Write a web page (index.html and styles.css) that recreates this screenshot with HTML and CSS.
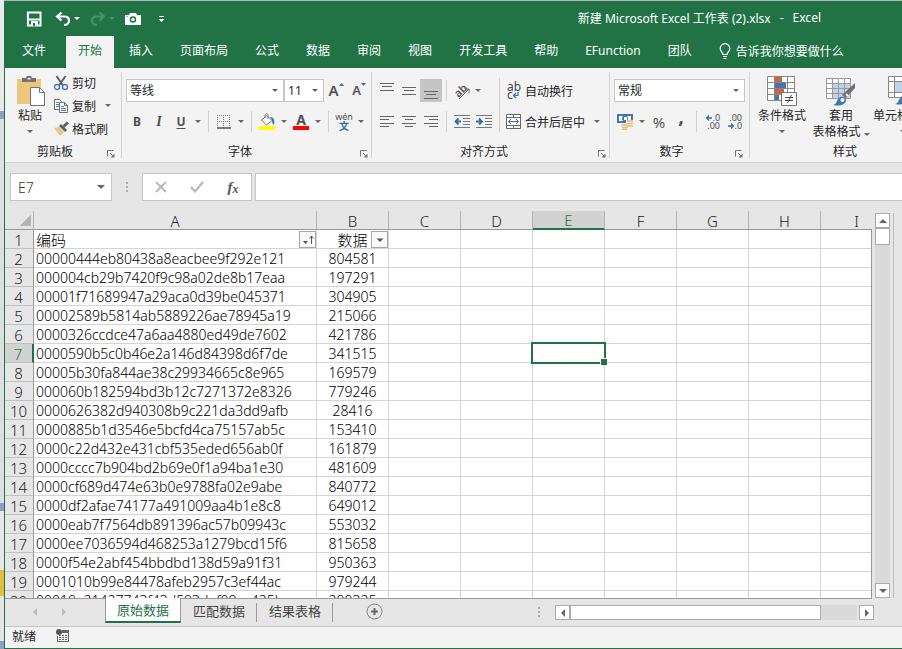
FILE: index.html
```html
<!DOCTYPE html>
<html lang="zh-CN">
<head>
  <meta charset="UTF-8">
  <meta name="viewport" content="width=device-width, initial-scale=1.0">
  <title>新建 Microsoft Excel 工作表 (2).xlsx - Excel</title>
  <link rel="stylesheet" href="styles.css">
</head>
<body>
  <div class="desktop"></div>
  <div class="window">

    <!-- Title bar -->
    <header class="titlebar">
      <div class="quick">
        <button class="q-save" aria-label="保存">
          <svg width="16" height="16" viewBox="0 0 16 16"><path d="M1.900 1.500h12.600v13h-12.600z" fill="none" stroke="#fff" stroke-width="2"/><path d="M2 8.500h12" stroke="#fff" stroke-width="2"/><path d="M5 10h7v5H5z" fill="#fff"/><path d="M7 12h2v3H7z" fill="#217346"/></svg>
        </button>
        <button class="q-undo" aria-label="撤消">
          <svg width="16" height="16" viewBox="0 0 16 16"><path d="M6.500 1.500L2 5.500l4.500 4M2.500 5.500H9c3 0 5 1.500 5 4s-2 4.500-5 4.500" fill="none" stroke="#fff" stroke-width="2.200"/></svg>
        </button>
        <button class="drop light" aria-label="撤消列表"></button>
        <button class="q-redo" aria-label="恢复" disabled>
          <svg width="16" height="16" viewBox="0 0 16 16"><path d="M9.500 1.500L14 5.500l-4.500 4M13.500 5.500H7c-3 0-5 1.500-5 4s2 4.500 5 4.500" fill="none" stroke="#4d8f6b" stroke-width="2.200"/></svg>
        </button>
        <button class="drop faded" aria-label="恢复列表" disabled></button>
        <button class="q-camera" aria-label="照相机">
          <svg width="16" height="14" viewBox="0 0 16 14"><path d="M0 3h4l1-2h6l1 2h4v10H0z" fill="#fff"/><circle cx="8" cy="7.500" r="2.500" fill="#fff" stroke="#217346" stroke-width="1.500"/><path d="M1.500 4.500h1" stroke="#217346"/></svg>
        </button>
        <button class="q-more" aria-label="自定义快速访问工具栏">
          <svg width="7" height="8" viewBox="0 0 7 8"><path d="M1 1.500h5" stroke="#fff"/><path d="M0.500 4h6l-3 3z" fill="#fff"/></svg>
        </button>
      </div>
      <h1 class="doc-title"><span>新建 Microsoft Excel 工作表 (2).xlsx</span><span>-</span><span>Excel</span></h1>
    </header>

    <!-- Ribbon tabs -->
    <nav class="tabs">
      <button class="tab file">文件</button>
      <button class="tab active">开始</button>
      <button class="tab">插入</button>
      <button class="tab">页面布局</button>
      <button class="tab">公式</button>
      <button class="tab">数据</button>
      <button class="tab">审阅</button>
      <button class="tab">视图</button>
      <button class="tab">开发工具</button>
      <button class="tab">帮助</button>
      <button class="tab">EFunction</button>
      <button class="tab">团队</button>
      <button class="tab tell">
        <svg width="12" height="17" viewBox="0 0 12 17"><path d="M4 11.500c0-2-2.800-3-2.800-6a4.800 4.800 0 0 1 9.600 0c0 3-2.800 4-2.800 6zM4 13.500h4M4.500 15.500h3" fill="none" stroke="#fff" stroke-width="1.200"/></svg>
        告诉我你想要做什么
      </button>
    </nav>

    <!-- Ribbon -->
    <div class="ribbon">
      <section class="group">
        <div class="group-body">
          <button class="big paste">
            <svg width="30" height="32" viewBox="0 0 30 32"><path d="M0 4h24v25H0z" fill="#eec77f"/><path d="M5 7V3h4c0-3 6-3 6 0h4v4z" fill="#737373"/><path d="M10.500 3h3v1.500h-3z" fill="#f3f3f3"/><path d="M13.500 12.500h9l5 5v13h-14z" fill="#fff" stroke="#737373"/><path d="M22.500 12.500v5h5" fill="none" stroke="#737373"/></svg>
            <span>粘贴</span>
            <i class="caret"></i>
          </button>
          <div class="clip-list">
            <button class="item">
              <svg width="16" height="16" viewBox="0 0 16 16"><path d="M3.500 1L10 10.500M12.500 1L6 10.500" stroke="#606060" stroke-width="2"/><circle cx="4" cy="12" r="2.500" fill="none" stroke="#4a7ebb" stroke-width="1.400"/><circle cx="12" cy="12" r="2.500" fill="none" stroke="#4a7ebb" stroke-width="1.400"/></svg>
              剪切
            </button>
            <div class="split">
              <button class="item">
                <svg width="16" height="16" viewBox="0 0 16 16"><path d="M1.500 1.500h5l2 2v8h-7z" fill="#fff" stroke="#6d6d6d"/><path d="M3 4.500h3M3 6.500h3M3 8.500h3" stroke="#4a7ebb"/><path d="M6.500 4.500h5l3 3v7h-8z" fill="#fff" stroke="#6d6d6d"/><path d="M11.500 4.500v3h3" fill="none" stroke="#6d6d6d"/><path d="M8 8.500h3M8 10.500h5M8 12.500h5" stroke="#4a7ebb"/></svg>
                复制
              </button>
              <button class="drop" aria-label="复制选项"></button>
            </div>
            <button class="item">
              <svg width="16" height="16" viewBox="0 0 16 16"><path d="M1 7l5-1 5 5-4 4z" fill="#eec08a"/><path d="M6 5l2-2 6 6-2 2z" fill="#606060"/><path d="M10.500 5.500L15 1.500" stroke="#606060" stroke-width="3"/></svg>
              格式刷
            </button>
          </div>
        </div>
        <footer class="group-foot"><span>剪贴板</span><button class="launch" aria-label="剪贴板设置"><svg width="8" height="8" viewBox="0 0 8 8"><path d="M.500 6.500v-6h6M3 3l3 3" fill="none" stroke="#777"/><path d="M7.500 3.500v4h-4z" fill="#777"/></svg></button></footer>
      </section>

      <section class="group font">
        <div class="group-body rows">
          <div class="line">
            <select class="combo font-name" aria-label="字体"><option>等线</option></select>
            <select class="combo font-size" aria-label="字号"><option>11</option></select>
            <button class="tool grow" aria-label="增大字号"><span class="letter">A</span><svg width="5" height="3" viewBox="0 0 5 3"><path d="M0 3L2.500 0 5 3z" fill="#2e75b6"/></svg></button>
            <button class="tool grow small" aria-label="减小字号"><span class="letter">A</span><svg width="5" height="3" viewBox="0 0 5 3"><path d="M0 0h5L2.500 3z" fill="#2e75b6"/></svg></button>
          </div>
          <div class="line">
            <button class="tool bold">B</button>
            <button class="tool italic">I</button>
            <button class="tool under">U</button>
            <button class="drop" aria-label="下划线选项"></button>
            <span class="sep"></span>
            <button class="tool" aria-label="边框"><svg width="14" height="14" viewBox="0 0 14 14"><path d="M0 .500h14M0 6.500h14M.500 0v13M6.500 0v13M12.500 0v13" stroke="#777" stroke-dasharray="1 1"/><path d="M0 13h14" stroke="#555" stroke-width="1.500"/></svg></button>
            <button class="drop" aria-label="边框选项"></button>
            <span class="sep"></span>
            <button class="tool" aria-label="填充颜色"><svg width="16" height="17" viewBox="0 0 16 17"><path d="M2.500 7L8 2.500l5 5-5.500 4.500z" fill="#fff" stroke="#777"/><path d="M6 5V2.500C6 0 9 0 9 2.500V6" fill="none" stroke="#777"/><path d="M11 4c4 0 5 3 4 8-2-1-2-4-2-5z" fill="#3c78b4"/><path d="M0 13h16v4H0z" fill="#ff0"/></svg></button>
            <button class="drop" aria-label="填充颜色选项"></button>
            <button class="tool font-color" aria-label="字体颜色"><span>A</span></button>
            <button class="drop" aria-label="字体颜色选项"></button>
            <span class="sep"></span>
            <button class="tool phonetic" aria-label="拼音指南"><span>wén</span><b>文</b></button>
            <button class="drop" aria-label="拼音选项"></button>
          </div>
        </div>
        <footer class="group-foot"><span>字体</span><button class="launch" aria-label="字体设置"><svg width="8" height="8" viewBox="0 0 8 8"><path d="M.500 6.500v-6h6M3 3l3 3" fill="none" stroke="#777"/><path d="M7.500 3.500v4h-4z" fill="#777"/></svg></button></footer>
      </section>

      <section class="group align">
        <div class="group-body">
          <div class="rows align-tools">
            <div class="line">
              <button class="tool" aria-label="顶端对齐"><svg width="14" height="16" viewBox="0 0 14 16"><path d="M0 .500h14M2 3.500h10M0 7.500h14" stroke="#666"/></svg></button>
              <button class="tool" aria-label="垂直居中"><svg width="14" height="16" viewBox="0 0 14 16"><path d="M0 4.500h14M2 7.500h10M0 11.500h14" stroke="#666"/></svg></button>
              <button class="tool pressed" aria-label="底端对齐"><svg width="14" height="16" viewBox="0 0 14 16"><path d="M0 8.500h14M2 11.500h10M0 15.500h14" stroke="#666"/></svg></button>
              <span class="sep"></span>
              <button class="tool rotate" aria-label="方向"><svg width="18" height="18" viewBox="0 0 18 18"><text x="1" y="13" transform="rotate(-45 7 9)">ab</text><path d="M6 17L16 7M11.500 7H16v4.500" fill="none" stroke="#666"/></svg></button>
              <button class="drop tight" aria-label="方向选项"></button>
            </div>
            <div class="line">
              <button class="tool" aria-label="左对齐"><svg width="14" height="12" viewBox="0 0 14 12"><path d="M0 .500h14M0 3.500h9M0 7.500h14M0 10.500h9" stroke="#666"/></svg></button>
              <button class="tool" aria-label="居中"><svg width="14" height="12" viewBox="0 0 14 12"><path d="M0 .500h14M3 3.500h8M0 7.500h14M3 10.500h8" stroke="#666"/></svg></button>
              <button class="tool" aria-label="右对齐"><svg width="14" height="12" viewBox="0 0 14 12"><path d="M0 .500h14M5 3.500h9M0 7.500h14M5 10.500h9" stroke="#666"/></svg></button>
              <span class="sep"></span>
              <button class="tool" aria-label="减少缩进量"><svg width="16" height="14" viewBox="0 0 16 14"><path d="M0 .500h16M9 3.500h7M9 6.500h7M9 9.500h7M0 12.500h16" stroke="#777"/><path d="M7 6.500H2M4.500 3.500l-3 3 3 3" fill="none" stroke="#2e6eb0" stroke-width="1.800"/></svg></button>
              <button class="tool" aria-label="增加缩进量"><svg width="16" height="14" viewBox="0 0 16 14"><path d="M0 .500h16M9 3.500h7M9 6.500h7M9 9.500h7M0 12.500h16" stroke="#777"/><path d="M0 6.500h5M3 3.500l3 3-3 3" fill="none" stroke="#2e6eb0" stroke-width="1.800"/></svg></button>
            </div>
          </div>
          <div class="rows wrap-tools">
            <div class="line">
              <button class="item"><svg class="abc" width="15" height="20" viewBox="0 0 15 20"><text x="1" y="10">ab</text><text x="1" y="18">c</text><path d="M12 11v3.500H8M10 12l-2.500 2.500L10 17" fill="none" stroke="#2e6eb0" stroke-width="1.200"/></svg>自动换行</button>
            </div>
            <div class="line">
              <button class="item"><svg width="15" height="16" viewBox="0 0 15 16"><path d="M.500 .500h14v14H.500zM.500 3.500h14M.500 11.500h14M7.500 .500v3M7.500 11.500v3" fill="#fff" stroke="#666"/><path d="M2.500 7.500h10M5 5L2.500 7.500 5 10M10 5l2.500 2.500L10 10" fill="none" stroke="#2e6eb0"/></svg>合并后居中</button>
              <button class="drop wide" aria-label="合并选项"></button>
            </div>
          </div>
        </div>
        <footer class="group-foot"><span>对齐方式</span><button class="launch" aria-label="对齐设置"><svg width="8" height="8" viewBox="0 0 8 8"><path d="M.500 6.500v-6h6M3 3l3 3" fill="none" stroke="#777"/><path d="M7.500 3.500v4h-4z" fill="#777"/></svg></button></footer>
      </section>

      <section class="group">
        <div class="group-body rows">
          <div class="line">
            <select class="combo number-format" aria-label="数字格式"><option>常规</option></select>
          </div>
          <div class="line">
            <button class="tool" aria-label="会计数字格式"><svg width="17" height="17" viewBox="0 0 17 17"><path d="M0 1h16v9H0z" fill="#3c78b4"/><path d="M2 3h12v5H2z" fill="#fff"/><circle cx="8" cy="5.500" r="3" fill="#3c78b4"/><path d="M7 4h3v3H7z" fill="#fff"/><path d="M9 7h7v8h-4v2H5v-6h4z" fill="#f3f3f3"/><path d="M10 8h6M10 10.500h6M10 13h6M4.500 12h6M5 14.500h6M5 16.500h5" stroke="#e8bb78" stroke-width="1.500"/></svg></button>
            <button class="drop" aria-label="货币选项"></button>
            <button class="tool percent">%</button>
            <button class="tool comma">,</button>
            <span class="sep"></span>
            <button class="tool decimal" aria-label="增加小数位数"><span><svg width="6" height="6" viewBox="0 0 6 6"><path d="M6 3H1M3 .500L.700 3 3 5.500" fill="none" stroke="#2e6eb0" stroke-width="1.300"/></svg>.0</span><span>.00</span></button>
            <button class="tool decimal" aria-label="减少小数位数"><span>.00</span><span><svg width="6" height="6" viewBox="0 0 6 6"><path d="M0 3h5M3 .500L5.300 3 3 5.500" fill="none" stroke="#2e6eb0" stroke-width="1.300"/></svg>.0</span></button>
          </div>
        </div>
        <footer class="group-foot"><span>数字</span><button class="launch" aria-label="数字设置"><svg width="8" height="8" viewBox="0 0 8 8"><path d="M.500 6.500v-6h6M3 3l3 3" fill="none" stroke="#777"/><path d="M7.500 3.500v4h-4z" fill="#777"/></svg></button></footer>
      </section>

      <section class="group styles">
        <div class="group-body">
          <button class="big">
            <svg width="30" height="32" viewBox="0 0 30 32"><path d="M.500 1.500h27v24H.500z" fill="#fff"/><path d="M8 2h6v5H8zM8 14h9v5H8z" fill="#d9603c"/><path d="M8 8h11v5H8zM8 20h4v5H8z" fill="#3c78b4"/><path d="M.500 1.500h27v24H.500zM.500 7.500h27M.500 13.500h27M.500 19.500h27M7.500 1.500v24M20.500 1.500v24M14.500 1.500v6" fill="none" stroke="#888"/><path d="M14.500 17.500h15v13h-15z" fill="#fff" stroke="#777"/><path d="M18 22.500h8M18 25.500h8M24.500 20l-4 8" stroke="#444"/></svg>
            <span>条件格式</span>
            <i class="caret"></i>
          </button>
          <button class="big">
            <svg width="30" height="32" viewBox="0 0 30 32"><path d="M.500 3.500h24v20H.500z" fill="#fff"/><path d="M7 9h17v14H7z" fill="#c0d3ea"/><path d="M.500 3.500h24v20H.500zM.500 8.500h24M.500 13.500h24M.500 18.500h24M6.500 3.500v20M12.500 3.500v20M18.500 3.500v20" fill="none" stroke="#999"/><path d="M29 8v5l-9 10-4-3z" fill="#707070"/><path d="M20 19l2 2" stroke="#fff" stroke-width="2"/><path d="M7 30c4-1 3-4 6-7 3-3 8 0 7 3-2 5-8 5-13 4z" fill="#3c78b4"/><circle cx="16.500" cy="25" r="2" fill="#fff"/></svg>
            <span>套用</span>
            <span>表格格式 <i class="caret"></i></span>
          </button>
          <button class="big">
            <svg width="30" height="32" viewBox="0 0 30 32"><path d="M.500 1.500h27v21H.500z" fill="#fff"/><path d="M6 7h16v11H6z" fill="#c0d3ea"/><path d="M.500 1.500h27v21H.500zM.500 6.500h27M.500 17.500h27M6.500 1.500v21M21.500 1.500v21" fill="none" stroke="#888"/><path d="M7 29c4-1 3-4 6-7 3-3 8 0 7 3-2 5-8 5-13 4z" fill="#3c78b4"/></svg>
            <span>单元格样式</span>
            <i class="caret"></i>
          </button>
        </div>
        <footer class="group-foot"><span>样式</span></footer>
      </section>
    </div>

    <!-- Formula bar -->
    <div class="formula-bar">
      <div class="name-box">
        <input type="text" value="E7" aria-label="名称框">
        <button class="drop large" aria-label="名称列表"></button>
      </div>
      <span class="dots"></span>
      <div class="fx-box">
        <button aria-label="取消"><svg width="12" height="12" viewBox="0 0 12 12"><path d="M1 1l10 10M11 1L1 11" stroke="#b8b8b8" stroke-width="1.800"/></svg></button>
        <button aria-label="输入"><svg width="14" height="12" viewBox="0 0 14 12"><path d="M1 6l4 4.500L13 1" fill="none" stroke="#b8b8b8" stroke-width="2.200"/></svg></button>
        <button class="fx" aria-label="插入函数">f<small>x</small></button>
      </div>
      <input class="formula" type="text" aria-label="编辑栏">
    </div>

    <!-- Sheet -->
    <div class="sheet">
      <div class="grid">
        <table>
          <colgroup><col class="c-num"><col class="c-a"><col><col><col><col><col><col><col><col></colgroup>
          <thead>
            <tr><th class="corner"></th><th>A</th><th>B</th><th>C</th><th>D</th><th class="on">E</th><th>F</th><th>G</th><th>H</th><th>I</th></tr>
          </thead>
          <tbody>
            <tr class="head-row"><th>1</th><td>编码<button class="filter" aria-label="排序"><svg width="14" height="14" viewBox="0 0 14 14"><path d="M2 8h5L4.500 11zM10 3h1v8h-1z" fill="#555"/><path d="M8.500 5.500l2-2.500 2 2.500" fill="none" stroke="#555"/></svg></button></td><td>数据<button class="filter" aria-label="筛选"><svg width="14" height="14" viewBox="0 0 14 14"><path d="M3.500 5.500h7L7 9z" fill="#555"/></svg></button></td><td></td><td></td><td></td><td></td><td></td><td></td><td></td></tr>
            <tr><th>2</th><td>00000444eb80438a8eacbee9f292e121</td><td>804581</td><td></td><td></td><td></td><td></td><td></td><td></td><td></td></tr>
            <tr><th>3</th><td>000004cb29b7420f9c98a02de8b17eaa</td><td>197291</td><td></td><td></td><td></td><td></td><td></td><td></td><td></td></tr>
            <tr><th>4</th><td>00001f71689947a29aca0d39be045371</td><td>304905</td><td></td><td></td><td></td><td></td><td></td><td></td><td></td></tr>
            <tr><th>5</th><td>00002589b5814ab5889226ae78945a19</td><td>215066</td><td></td><td></td><td></td><td></td><td></td><td></td><td></td></tr>
            <tr><th>6</th><td>0000326ccdce47a6aa4880ed49de7602</td><td>421786</td><td></td><td></td><td></td><td></td><td></td><td></td><td></td></tr>
            <tr><th class="on">7</th><td>0000590b5c0b46e2a146d84398d6f7de</td><td>341515</td><td></td><td></td><td class="selected"></td><td></td><td></td><td></td><td></td></tr>
            <tr><th>8</th><td>00005b30fa844ae38c29934665c8e965</td><td>169579</td><td></td><td></td><td></td><td></td><td></td><td></td><td></td></tr>
            <tr><th>9</th><td>000060b182594bd3b12c7271372e8326</td><td>779246</td><td></td><td></td><td></td><td></td><td></td><td></td><td></td></tr>
            <tr><th>10</th><td>0000626382d940308b9c221da3dd9afb</td><td>28416</td><td></td><td></td><td></td><td></td><td></td><td></td><td></td></tr>
            <tr><th>11</th><td>0000885b1d3546e5bcfd4ca75157ab5c</td><td>153410</td><td></td><td></td><td></td><td></td><td></td><td></td><td></td></tr>
            <tr><th>12</th><td>0000c22d432e431cbf535eded656ab0f</td><td>161879</td><td></td><td></td><td></td><td></td><td></td><td></td><td></td></tr>
            <tr><th>13</th><td>0000cccc7b904bd2b69e0f1a94ba1e30</td><td>481609</td><td></td><td></td><td></td><td></td><td></td><td></td><td></td></tr>
            <tr><th>14</th><td>0000cf689d474e63b0e9788fa02e9abe</td><td>840772</td><td></td><td></td><td></td><td></td><td></td><td></td><td></td></tr>
            <tr><th>15</th><td>0000df2afae74177a491009aa4b1e8c8</td><td>649012</td><td></td><td></td><td></td><td></td><td></td><td></td><td></td></tr>
            <tr><th>16</th><td>0000eab7f7564db891396ac57b09943c</td><td>553032</td><td></td><td></td><td></td><td></td><td></td><td></td><td></td></tr>
            <tr><th>17</th><td>0000ee7036594d468253a1279bcd15f6</td><td>815658</td><td></td><td></td><td></td><td></td><td></td><td></td><td></td></tr>
            <tr><th>18</th><td>0000f54e2abf454bbdbd138d59a91f31</td><td>950363</td><td></td><td></td><td></td><td></td><td></td><td></td><td></td></tr>
            <tr><th>19</th><td>0001010b99e84478afeb2957c3ef44ac</td><td>979244</td><td></td><td></td><td></td><td></td><td></td><td></td><td></td></tr>
            <tr><th>20</th><td>00010a21427743f43d593def09ac425b</td><td>299325</td><td></td><td></td><td></td><td></td><td></td><td></td><td></td></tr>
          </tbody>
        </table>
      </div>
      <div class="vscroll">
        <button class="scroll-btn" aria-label="向上"><i class="tri up"></i></button>
        <div class="vthumb"></div>
        <div class="track"></div>
        <button class="scroll-btn" aria-label="向下"><i class="tri down"></i></button>
      </div>
    </div>

    <!-- Sheet tabs -->
    <div class="sheet-bar">
      <div class="sheet-nav">
        <button aria-label="上一个工作表"><i class="tri left pale"></i></button>
        <button aria-label="下一个工作表"><i class="tri right pale"></i></button>
      </div>
      <button class="sheet-tab active">原始数据</button>
      <button class="sheet-tab">匹配数据</button>
      <button class="sheet-tab">结果表格</button>
      <button class="add-sheet" aria-label="新工作表"><svg width="17" height="17" viewBox="0 0 17 17"><circle cx="8.500" cy="8.500" r="7.500" fill="none" stroke="#808080"/><path d="M8.500 5v7M5 8.500h7" stroke="#666" stroke-width="2"/></svg></button>
      <div class="hscroll">
        <span class="dots"></span>
        <button class="scroll-btn" aria-label="向左"><i class="tri left"></i></button>
        <div class="hthumb"></div>
        <div class="htrack"></div>
        <button class="scroll-btn" aria-label="向右"><i class="tri right"></i></button>
      </div>
    </div>

    <footer class="status">
      <span>就绪</span>
      <svg width="14" height="14" viewBox="0 0 14 14"><path d="M6 1h7v3H6z" fill="#666"/><path d="M1.500 7v5.500h11V3" fill="none" stroke="#666"/><circle cx="3" cy="3" r="3" fill="#555"/><path d="M3 6.500h8M3 8.500h8M3 10.500h8" stroke="#666" stroke-dasharray="2 1"/></svg>
    </footer>
  </div>
</body>
</html>
```
FILE: styles.css
```css
:root {
  --green: #217346;
  --ribbon: #f3f3f3;
  --panel: #e6e6e6;
  --line: #c6c6c6;
  --edge: #999;
  --cell-line: #d4d4d4;
}

* {
  box-sizing: border-box;
}

body {
  margin: 0;
  height: 100vh;
  display: flex;
  overflow: hidden;
  background: #b4b4b4;
  font-family: "Noto Sans", "Noto Sans CJK SC", sans-serif;
  font-size: 12px;
  color: #262626;
}

button, input, select {
  font: inherit;
  color: inherit;
  margin: 0;
  padding: 0;
  border: none;
  background: none;
}

button {
  display: flex;
  align-items: center;
  justify-content: center;
  white-space: nowrap;
}

svg {
  display: block;
  flex: none;
}

/* Strip of the desktop left of the window */
.desktop {
  flex: 0 0 4px;
  background: linear-gradient(#e8e8ea 0 111px, #8c9fc8 111px 119px, #dedfe3 119px 503px, #8c9fc8 503px 511px, #e6e6e8 511px 570px, #e3bd3f 570px 596px, #e4e4e6 596px 641px, #8c9fc8 641px);
}

.window {
  flex: 1;
  min-width: 0;
  margin-top: 1px;
  display: flex;
  flex-direction: column;
  border-left: 1px solid var(--green);
  border-bottom: 1px solid var(--green);
  background: var(--panel);
}

/* Title bar */
.titlebar {
  flex: none;
  height: 35px;
  display: flex;
  align-items: center;
  justify-content: space-between;
  padding: 0 81px 0 21px;
  background: var(--green);
  color: #fff;
}

.quick {
  display: flex;
  align-items: center;
}

.q-undo {
  margin-left: 13px;
}

.q-redo {
  margin-left: 7px;
}

.q-camera {
  margin-left: 7px;
}

.q-more {
  margin-left: 17px;
}

.doc-title {
  display: flex;
  gap: 9px;
  margin: 0;
  padding-bottom: 2px;
  font-size: 12px;
  font-weight: 400;
  white-space: nowrap;
}

/* Ribbon tabs */
.tabs {
  flex: none;
  height: 32px;
  display: flex;
  gap: 3px;
  padding-left: 5px;
  background: var(--green);
}

.tab {
  padding: 0 12px 4px;
  color: #fff;
}

.tab.file {
  margin-right: 5px;
}

.tab.active {
  background: var(--ribbon);
  color: var(--green);
}

.tab.tell {
  gap: 5px;
  padding-bottom: 2px;
}

/* Ribbon */
.ribbon {
  flex: none;
  height: 95px;
  display: flex;
  overflow: hidden;
  background: var(--ribbon);
  border-bottom: 1px solid #d0d0d0;
}

.group {
  flex: none;
  display: flex;
  flex-direction: column;
  margin: 4px 0;
  padding: 0 4px;
  border-right: 1px solid #d2d2d2;
}

.group.font, .group.align {
  padding-right: 1px;
}

.group-body {
  flex: 1;
  display: flex;
}

.rows {
  display: flex;
  flex-direction: column;
  gap: 8px;
  padding-top: 7px;
}

.line {
  display: flex;
  align-items: center;
  height: 23px;
}

.group-foot {
  display: flex;
  align-items: center;
  height: 16px;
}

.group-foot span {
  flex: 1;
  padding-top: 2px;
  text-align: center;
}

.launch {
  width: 16px;
  height: 16px;
  padding: 8px 0 0 4px;
}

.tool {
  width: 22px;
  height: 23px;
  color: #505050;
}

.pressed {
  background: #c5c5c5;
}

.drop {
  width: 12px;
  height: 23px;
}

.drop::before, .caret {
  content: "";
  display: inline-block;
  border: 3px solid transparent;
  border-top-color: #666;
  border-bottom: none;
}

.drop.light::before {
  border-top-color: #fff;
}

.drop.faded::before {
  border-top-color: #4d8f6b;
}

.drop.tight {
  width: 9px;
}

.drop.wide {
  width: 23px;
}

.drop.large::before {
  border-width: 4px 4px 0;
}

.sep {
  width: 1px;
  height: 21px;
  margin: 0 4px;
  background: #d2d2d2;
}

.item {
  gap: 4px;
  height: 23px;
}

.big {
  flex-direction: column;
  justify-content: flex-start;
  min-width: 58px;
  padding-top: 3px;
  line-height: 16px;
}

.big svg {
  margin-bottom: 1px;
}

.big > .caret {
  margin-top: 6px;
}

.paste {
  min-width: 42px;
  padding-left: 4px;
}

.paste span, .paste .caret {
  margin-right: 4px;
}

.clip-list {
  display: flex;
  flex-direction: column;
  align-items: flex-start;
  margin-top: -1px;
  padding: 0 3px 0 2px;
}

.clip-list .item {
  gap: 3px;
}

.split {
  display: flex;
  gap: 6px;
}

.combo {
  height: 23px;
  padding: 0 3px;
  border: 1px solid var(--line);
  border-radius: 0;
  appearance: none;
  background: #fff url("data:image/svg+xml,%3Csvg xmlns='http://www.w3.org/2000/svg' width='6' height='3'%3E%3Cpath d='M0 0h6L3 3z' fill='%23666'/%3E%3C/svg%3E") no-repeat right 5px center;
}

.font-name {
  width: 158px;
}

.font-size {
  width: 40px;
}

.number-format {
  width: 131px;
}

.grow {
  align-items: flex-start;
  margin-left: 1px;
  font-size: 15px;
  font-weight: 600;
  line-height: 23px;
}

.grow svg {
  margin-top: 4px;
}

.grow.small {
  font-size: 13px;
}

.bold, .italic, .under {
  font-weight: 700;
}

.italic {
  font-style: italic;
  font-family: "Liberation Serif", serif;
  font-size: 14px;
}

.under {
  text-decoration: underline;
  text-underline-offset: 2px;
}

.font-color span {
  width: 16px;
  border-bottom: 4px solid #f00;
  font-size: 14px;
  font-weight: 700;
  line-height: 13px;
}

.phonetic {
  flex-direction: column;
  font-size: 9px;
  line-height: 8px;
}

.phonetic b {
  color: #2e6eb0;
  font-size: 10px;
  line-height: 10px;
}

.align-tools {
  padding-right: 4px;
}

.wrap-tools {
  padding-left: 7px;
  background: linear-gradient(#d2d2d2, #d2d2d2) no-repeat 0 6px / 1px 54px;
}

.rotate text {
  font-size: 11px;
  font-weight: 600;
  fill: #555;
}

.abc text {
  font-size: 12px;
  fill: #444;
}

.percent {
  font-size: 15px;
}

.comma {
  padding-bottom: 12px;
  font-size: 20px;
  font-weight: 700;
}

.decimal {
  flex-direction: column;
  align-items: flex-end;
  padding-right: 3px;
  font-size: 9px;
  line-height: 8px;
}

.decimal span {
  display: flex;
  align-items: center;
}

.styles {
  flex: 0 0 208px;
  padding-left: 3px;
}

.styles .big + .big {
  margin-left: 1px;
}

.styles .big:last-child {
  margin-left: 3px;
}

.styles .group-foot {
  padding-right: 16px;
}

/* Formula bar */
.formula-bar {
  flex: none;
  height: 48px;
  display: flex;
  align-items: flex-start;
  padding: 10px 0 0 5px;
}

.name-box, .fx-box, .formula {
  height: 28px;
  border: 1px solid var(--line);
  background: #fff;
}

.name-box {
  display: flex;
  align-items: center;
  width: 102px;
}

.name-box input {
  flex: 1;
  min-width: 0;
  padding-left: 7px;
  font-size: 14px;
  font-weight: 300;
  color: #333;
}

.name-box .drop {
  width: 20px;
}

.dots {
  width: 2px;
  height: 10px;
  background: repeating-linear-gradient(#aaa 0 2px, transparent 2px 4px);
}

.formula-bar .dots {
  margin: 9px 14px;
}

.fx-box {
  display: flex;
  width: 110px;
}

.fx-box button {
  flex: 1;
}

.fx {
  font: italic 700 15px "Liberation Serif", serif;
  color: #555;
}

.fx small {
  font-size: 12px;
  padding-top: 4px;
}

.formula {
  flex: 1;
  min-width: 0;
  margin-left: 3px;
  border-right: none;
}

/* Sheet */
.sheet {
  flex: 1;
  min-height: 0;
  display: flex;
}

.grid {
  flex: 1;
  min-width: 0;
  overflow: hidden;
  background: linear-gradient(var(--panel) 18px, #fff 18px);
  position: relative;
}

.grid::after {
  content: "";
  position: absolute;
  top: 18px;
  right: 0;
  bottom: 0;
  border-right: 1px solid var(--edge);
}

table {
  width: 888px;
  table-layout: fixed;
  border-collapse: separate;
  border-spacing: 0;
  font-size: 14px;
  color: #000;
}

col {
  width: 72px;
}

.c-num {
  width: 29px;
}

.c-a {
  width: 283px;
}

th, td {
  height: 19px;
  padding: 2px 0 0;
  line-height: 16px;
  font-weight: 300;
  white-space: nowrap;
  text-align: center;
  border-right: 1px solid var(--cell-line);
  border-bottom: 1px solid var(--cell-line);
}

thead th {
  font-size: 15px;
  color: #222;
  background: var(--panel);
  border-right-color: #b4b4b4;
  border-bottom-color: var(--edge);
}

tbody th {
  padding-right: 1px;
  font-size: 15px;
  color: #222;
  background: var(--panel);
  border-right-color: var(--edge);
  border-bottom-color: #c0c0c0;
}

.corner {
  background: linear-gradient(135deg, transparent 50%, #b4b4b4 50%) no-repeat 14px 4px / 12px 11px, var(--panel);
}

thead .on {
  padding-top: 1px;
  background: #d2d2d2;
  color: var(--green);
  border-bottom: 2px solid var(--green);
}

tbody .on {
  background: #d2d2d2;
  color: var(--green);
  border-right: 2px solid var(--green);
}

td:nth-child(2) {
  padding-left: 2px;
  text-align: left;
}

.head-row td {
  position: relative;
  font-size: 15px;
}

.filter {
  position: absolute;
  right: 0;
  bottom: 0;
  width: 17px;
  height: 17px;
  border: 1px solid #a6a6a6;
  background: #f7f8fa;
}

.selected {
  position: relative;
}

.selected::before {
  content: "";
  position: absolute;
  z-index: 1;
  inset: -2px;
  border: 2px solid var(--green);
}

.selected::after {
  content: "";
  position: absolute;
  z-index: 2;
  right: -3px;
  bottom: -3px;
  width: 6px;
  height: 6px;
  border: 1px solid #fff;
  border-width: 1px 0 0 1px;
  background: var(--green);
}

/* Scroll bars */
.vscroll {
  flex: 0 0 30px;
  display: flex;
  flex-direction: column;
  padding: 2px 12px 0 3px;
  background: linear-gradient(#bbb, #bbb) no-repeat 21px 2px / 1px 100%;
}

.scroll-btn {
  flex: none;
  width: 15px;
  height: 15px;
  border: 1px solid #ababab;
  background: #fff;
}

.vthumb {
  height: 17px;
  border: 1px solid #ababab;
  background: #fff;
}

.track {
  flex: 1;
  background: #dadada;
}

.tri {
  border: 4px solid transparent;
}

.tri.up {
  border-top: none;
  border-bottom-color: #666;
}

.tri.down {
  border-bottom: none;
  border-top-color: #666;
}

.tri.left {
  border-left: none;
  border-right-color: #666;
}

.tri.right {
  border-right: none;
  border-left-color: #666;
}

.tri.left.pale {
  border-right-color: #bbb;
}

.tri.right.pale {
  border-left-color: #bbb;
}

/* Sheet tabs */
.sheet-bar {
  flex: none;
  height: 29px;
  display: flex;
  align-items: flex-start;
  background: linear-gradient(90deg, var(--edge), var(--edge)) no-repeat 0 0 / calc(100% - 30px) 1px;
  border-bottom: 1px solid var(--line);
}

.sheet-nav {
  display: flex;
  gap: 20px;
  width: 100px;
  height: 27px;
  padding-left: 25px;
}

.sheet-nav button {
  width: 9px;
}

.sheet-tab {
  height: 25px;
  padding: 0 12px;
  font-size: 13px;
  line-height: 18px;
  color: #444;
  position: relative;
}

.sheet-tab:not(.active)::after {
  content: "";
  position: absolute;
  right: 0;
  top: 5px;
  height: 19px;
  border-right: 1px solid var(--edge);
}

.sheet-tab.active {
  padding: 0 11px;
  border: 1px solid var(--edge);
  border-width: 0 1px 2px;
  border-bottom-color: var(--green);
  background: #fff;
  color: var(--green);
}

.add-sheet {
  margin-left: 33px;
  height: 27px;
}

.hscroll {
  flex: 0 0 336px;
  display: flex;
  margin: 7px 28px 0 auto;
}

.hscroll .dots {
  margin: 2px 15px 0 0;
}

.hthumb {
  flex: 1;
  height: 15px;
  border: 1px solid #ababab;
  background: #fff;
}

.htrack {
  width: 36px;
  height: 15px;
  margin-right: 2px;
  background: #dadada;
}

/* Status bar */
.status {
  flex: none;
  height: 21px;
  display: flex;
  align-items: center;
  gap: 20px;
  padding: 0 0 3px 7px;
  background: var(--ribbon);
}
```
